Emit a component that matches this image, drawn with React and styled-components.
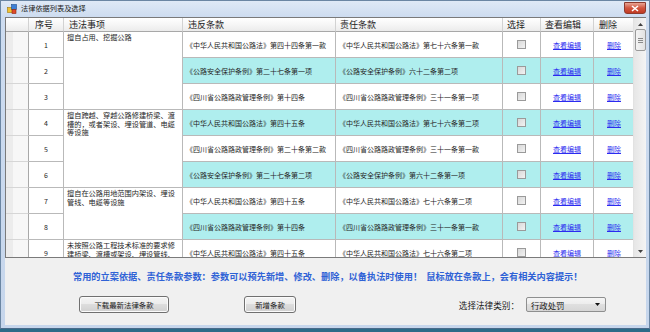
import React from "react"
import styled, { createGlobalStyle } from "styled-components"

const GlobalStyle = createGlobalStyle`
  html, body {
    margin: 0;
    padding: 0;
  }
  body {
    width: 650px;
    height: 332px;
    overflow: hidden;
    background: #2c6b88;
    font-family: "Noto Sans CJK SC", "Noto Sans", sans-serif;
    color: #1e1e1e;
  }
`

const Window = styled.div`
  width: 650px;
  height: 329px;
  box-sizing: border-box;
  display: flex;
  flex-direction: column;
  padding: 0 3px 3px 4px;
  border: 1px solid #6b86a3;
  border-bottom-color: #4a6a8a;
  background: linear-gradient(#dfe9f6, #cddcf0 16px, #c6d6ec);
`

const TitleBar = styled.div`
  height: 16px;
  display: flex;
  align-items: center;
  gap: 4px;
  padding-left: 2px;
`

const Title = styled.span`
  font-size: 7.2px;
  line-height: 1;
  color: #1a1a1a;
  flex: 1;
`

const CloseButton = styled.div`
  width: 22px;
  height: 12px;
  margin-top: -2px;
  border: 1px solid #8d3a2e;
  border-radius: 0 0 3px 3px;
  box-sizing: border-box;
  background: linear-gradient(#e8a493, #d2553f 50%, #c03a22);
  display: flex;
  align-items: center;
  justify-content: center;
`

const Client = styled.div`
  flex: 1;
  display: flex;
  flex-direction: column;
  background: #f0f0f0;
`

const GridBox = styled.div`
  height: 241px;
  box-sizing: border-box;
  border: 1px solid #7a7a7a;
  border-right: none;
  display: flex;
  overflow: hidden;
  background: #ffffff;
`

const Table = styled.div`
  display: grid;
  grid-template-columns: 23px 35px 119px 153px 167px 38px 53px 41px;
  grid-template-rows: 14px;
  grid-auto-rows: 26px;
  align-content: start;
  overflow: hidden;
`

const HeadCell = styled.div`
  box-sizing: border-box;
  border-right: 1px solid #d2d2d2;
  border-bottom: 1px solid #a8a8a8;
  background: linear-gradient(#ffffff, #f6f6f6 50%, #ebebeb);
  font-size: 9px;
  line-height: 13px;
  padding-left: ${p => (p.$pad ? p.$pad : 5)}px;
  white-space: nowrap;
  overflow: hidden;
  color: #222;
`

const RowHead = styled.div`
  box-sizing: border-box;
  border-right: 1px solid #a8a8a8;
  border-bottom: 1px solid #d6d6d6;
  background: linear-gradient(to right, #ececec 0, #ececec 7px, #f7f7f7 7px);
`

const Cell = styled.div`
  box-sizing: border-box;
  border-right: 1px solid #b9b9b9;
  border-bottom: 1px solid #b9b9b9;
  background: ${p => (p.$alt ? "#afeeee" : "#ffffff")};
  font-size: 7px;
  display: flex;
  align-items: center;
  white-space: nowrap;
  overflow: hidden;
  color: #262626;
`

const SeqCell = styled(Cell)`
  justify-content: center;
`

const LawCell = styled(Cell)`
  padding-left: 3px;
`

const CenterCell = styled(Cell)`
  justify-content: center;
`

const ItemCell = styled.div`
  box-sizing: border-box;
  grid-row: span ${p => p.$span};
  border-right: 1px solid #b9b9b9;
  border-bottom: 1px solid #b9b9b9;
  background: #ffffff;
  font-size: 7.2px;
  line-height: 8.6px;
  padding: 1px 2px 0 3px;
  overflow: hidden;
  color: #262626;
`

const ItemLine = styled.div`
  white-space: nowrap;
`

const Check = styled.span`
  width: 7px;
  height: 7px;
  border: 1px solid #9a9a9a;
  background: linear-gradient(135deg, #d8d8d8, #f2f2f2);
`

const Link = styled.a`
  font-size: 7px;
  color: #2b2bf0;
  text-decoration: underline;
`

const ScrollBar = styled.div`
  width: 13px;
  flex: none;
  margin-left: auto;
  display: flex;
  flex-direction: column;
  align-items: center;
  background: linear-gradient(to right, #e6e6e6, #f4f4f4);
  border-left: 1px solid #e2e2e2;
  box-sizing: border-box;
`

const Arrow = styled.div`
  height: 12px;
  display: flex;
  align-items: center;
  justify-content: center;
`

const Thumb = styled.div`
  width: 11px;
  height: 22px;
  margin-top: -1px;
  box-sizing: border-box;
  border: 1px solid #9a9a9a;
  border-radius: 2px;
  background: linear-gradient(to right, #f4f4f4, #e2e2e2);
  display: flex;
  flex-direction: column;
  align-items: center;
  justify-content: center;
  gap: 1px;
`

const Grip = styled.span`
  width: 5px;
  height: 1px;
  background: #8a8a8a;
`

const Track = styled.div`
  flex: 1;
`

const Panel = styled.div`
  flex: 1;
  display: flex;
  flex-direction: column;
`

const Notice = styled.div`
  margin-top: 12px;
  padding-left: 68px;
  font-size: 9.2px;
  line-height: 12px;
  font-weight: 700;
  color: #2f62d6;
  white-space: nowrap;
`

const Actions = styled.div`
  margin-top: 14px;
  display: flex;
  align-items: center;
  padding: 0 40px 0 74px;
`

const Button = styled.button`
  width: ${p => p.$w}px;
  height: 17px;
  margin-right: ${p => p.$gap || 0}px;
  padding: 0;
  border: 1px solid #707070;
  border-radius: 3px;
  background: linear-gradient(#f4f4f4, #ececec 45%, #dddddd 50%, #d0d0d0);
  font-family: inherit;
  font-size: 7.4px;
  color: #1a1a1a;
  box-shadow: inset 0 0 0 1px #fbfbfb;
`

const Label = styled.span`
  margin-left: auto;
  margin-right: 7px;
  font-size: 8.6px;
  color: #1a1a1a;
`

const Select = styled.div`
  width: 80px;
  height: 15px;
  box-sizing: border-box;
  border: 1px solid #8e8f8f;
  border-radius: 2px;
  background: linear-gradient(#f5f5f5, #ececec 50%, #dfdfdf 50%, #d6d6d6);
  display: flex;
  align-items: center;
  padding: 0 5px 0 4px;
  font-size: 8.4px;
  color: #1a1a1a;
`

const SelectText = styled.span`
  flex: 1;
`

const rows = [
  ["《中华人民共和国公路法》第四十四条第一款", "《中华人民共和国公路法》第七十六条第一款"],
  ["《公路安全保护条例》第二十七条第一项", "《公路安全保护条例》六十二条第二项"],
  ["《四川省公路路政管理条例》第十四条", "《四川省公路路政管理条例》三十一条第一项"],
  ["《中华人民共和国公路法》第四十五条", "《中华人民共和国公路法》第七十六条第二项"],
  ["《四川省公路路政管理条例》第二十条第二款", "《四川省公路路政管理条例》三十一条第一款"],
  ["《公路安全保护条例》第二十七条第二项", "《公路安全保护条例》第六十二条第一项"],
  ["《中华人民共和国公路法》第四十五条", "《中华人民共和国公路法》七十六条第二项"],
  ["《四川省公路路政管理条例》第十四条", "《四川省公路路政管理条例》三十一条第一款"],
  ["《中华人民共和国公路法》第四十五条", "《中华人民共和国公路法》七十六条第二项"],
]

// 违法事项 merged over several rows, keyed by the first row index
const items = {
  0: { span: 3, lines: ["擅自占用、挖掘公路"] },
  3: { span: 3, lines: ["擅自跨越、穿越公路修建桥梁、渡", "槽的，或者架设、埋设管道、电缆", "等设施"] },
  6: { span: 2, lines: ["擅自在公路用地范围内架设、埋设", "管线、电缆等设施"] },
  8: { span: 1, lines: ["未按照公路工程技术标准的要求修", "建桥梁、渡槽或架设、埋设管线、", "电缆等设施"] },
}

const AppIcon = () => (
  <svg width="10" height="10" viewBox="0 0 10 10">
    <rect x="0.5" y="3.5" width="5" height="5" fill="#f2c230" stroke="#a07a10" strokeWidth="0.6" />
    <rect x="4.5" y="0.5" width="5" height="5" fill="#3c7fd6" stroke="#1f4f90" strokeWidth="0.6" />
    <rect x="5" y="5.5" width="4" height="4" fill="#e04a2a" stroke="#8a2410" strokeWidth="0.6" />
  </svg>
)

export default function App() {
  return (
    <>
      <GlobalStyle />
      <Window>
        <TitleBar>
          <AppIcon />
          <Title>法律依据列表及选择</Title>
          <CloseButton>
            <svg width="8" height="7" viewBox="0 0 8 7">
              <path d="M1 1 L7 6 M7 1 L1 6" stroke="#ffffff" strokeWidth="1.6" />
            </svg>
          </CloseButton>
        </TitleBar>
        <Client>
          <GridBox>
            <Table>
              <HeadCell />
              <HeadCell $pad={6}>序号</HeadCell>
              <HeadCell>违法事项</HeadCell>
              <HeadCell>违反条款</HeadCell>
              <HeadCell $pad={4}>责任条款</HeadCell>
              <HeadCell $pad={4}>选择</HeadCell>
              <HeadCell $pad={4}>查看编辑</HeadCell>
              <HeadCell>删除</HeadCell>
              {rows.map(([law, duty], i) => {
                const alt = i % 2 === 1
                const item = items[i]
                return (
                  <React.Fragment key={i}>
                    <RowHead />
                    <SeqCell>{i + 1}</SeqCell>
                    {item && (
                      <ItemCell $span={item.span}>
                        {item.lines.map((l, k) => (
                          <ItemLine key={k}>{l}</ItemLine>
                        ))}
                      </ItemCell>
                    )}
                    <LawCell $alt={alt}>{law}</LawCell>
                    <LawCell $alt={alt}>{duty}</LawCell>
                    <CenterCell $alt={alt}>
                      <Check />
                    </CenterCell>
                    <CenterCell $alt={alt}>
                      <Link>查看编辑</Link>
                    </CenterCell>
                    <CenterCell $alt={alt}>
                      <Link>删除</Link>
                    </CenterCell>
                  </React.Fragment>
                )
              })}
            </Table>
            <ScrollBar>
              <Arrow>
                <svg width="5" height="3" viewBox="0 0 5 3">
                  <path d="M0 3 L2.5 0 L5 3 Z" fill="#404040" />
                </svg>
              </Arrow>
              <Thumb>
                <Grip />
                <Grip />
                <Grip />
              </Thumb>
              <Track />
              <Arrow>
                <svg width="5" height="3" viewBox="0 0 5 3">
                  <path d="M0 0 L5 0 L2.5 3 Z" fill="#404040" />
                </svg>
              </Arrow>
            </ScrollBar>
          </GridBox>
          <Panel>
            <Notice>
              常用的立案依据、责任条款参数：参数可以预先新增、修改、删除，以备执法时使用！&nbsp;&nbsp;鼠标放在条款上，会有相关内容提示！
            </Notice>
            <Actions>
              <Button $w={90} $gap={75}>下载最新法律条款</Button>
              <Button $w={52}>新增条款</Button>
              <Label>选择法律类别：</Label>
              <Select>
                <SelectText>行政处罚</SelectText>
                <svg width="5" height="3" viewBox="0 0 5 3">
                  <path d="M0 0 L5 0 L2.5 3 Z" fill="#111" />
                </svg>
              </Select>
            </Actions>
          </Panel>
        </Client>
      </Window>
    </>
  )
}
